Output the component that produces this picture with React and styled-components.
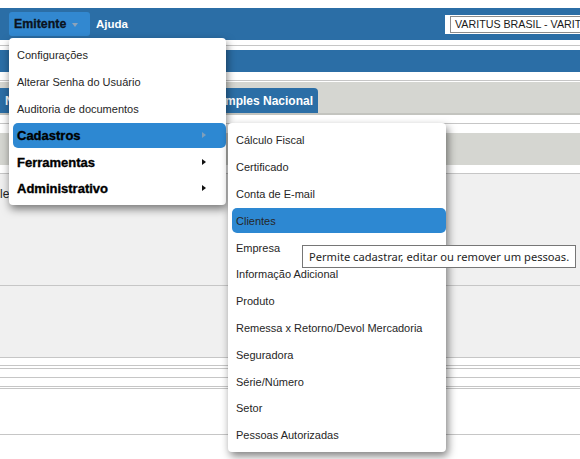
import { styled, createGlobalStyle } from "styled-components";

const GlobalStyle = createGlobalStyle`
  html, body {
    margin: 0;
    padding: 0;
    background: #ffffff;
    font-family: "Liberation Sans", Arial, sans-serif;
  }
`;

const mainItems = [
  { label: "Configurações" },
  { label: "Alterar Senha do Usuário" },
  { label: "Auditoria de documentos" },
  { label: "Cadastros", group: true, active: true },
  { label: "Ferramentas", group: true },
  { label: "Administrativo", group: true },
];

const cadastros = [
  "Cálculo Fiscal",
  "Certificado",
  "Conta de E-mail",
  "Clientes",
  "Empresa",
  "Informação Adicional",
  "Produto",
  "Remessa x Retorno/Devol Mercadoria",
  "Seguradora",
  "Série/Número",
  "Setor",
  "Pessoas Autorizadas",
];

function SubMenu() {
  return (
    <StSubMenu>
      {cadastros.map((label) => (
        <StItem key={label} $active={label === "Clientes"}>
          {label}
        </StItem>
      ))}
      <StTooltip>Permite cadastrar, editar ou remover um pessoas.</StTooltip>
    </StSubMenu>
  );
}

export default function App() {
  return (
    <>
      <GlobalStyle />
      <StPage>
        <StNavBar>
          <StNavMenu>
            <StEmitente>
              Emitente <StCaret />
            </StEmitente>
            <StDropdown>
              {mainItems.map((item) => (
                <StItem
                  key={item.label}
                  $active={item.active}
                  $group={item.group}
                >
                  {item.label}
                  {item.group && <StArrow $active={item.active} />}
                  {item.active && <SubMenu />}
                </StItem>
              ))}
            </StDropdown>
          </StNavMenu>
          <StNavLink>Ajuda</StNavLink>
          <StSelectWrap>
            <StSelect>VARITUS BRASIL - VARITU</StSelect>
          </StSelectWrap>
        </StNavBar>

        <StRule $top={5} $bottom={4} />
        <StSubBar />
        <StRule $top={8} $bottom={1} />

        <StTabBar>
          <StTab $width={200}>NF-e</StTab>
          <StTab $width={110}>Simples Nacional</StTab>
        </StTabBar>

        <StRule $top={8} $bottom={9} />
        <StToolBar />
        <StRule $top={8} $bottom={0} />

        <StPanel $height={111}>
          <StPanelText>le,</StPanelText>
        </StPanel>
        <StRule $top={0} $bottom={0} />
        <StPanel $height={71} />
        <StRule $top={0} $bottom={7} />
        <StRule $top={0} $bottom={2} />
        <StRule $top={0} $bottom={8} />
        <StRule $top={0} $bottom={8} />
        <StRule $top={0} $bottom={1} />
        <StRule $top={0} $bottom={45} />
        <StRule $top={0} $bottom={0} />
      </StPage>
    </>
  );
}

const StPage = styled.div`
  position: relative;
  width: 580px;
  height: 459px;
  padding-top: 8px;
  box-sizing: border-box;
  overflow: hidden;
`;

const StNavBar = styled.div`
  height: 32px;
  background: #2b6ea6;
  display: flex;
  align-items: center;
  padding-left: 9px;
`;

const StNavMenu = styled.div`
  position: relative;
  z-index: 10;
`;

const StEmitente = styled.div`
  height: 24px;
  width: 81px;
  box-sizing: border-box;
  padding-left: 5px;
  display: flex;
  align-items: center;
  gap: 6px;
  background: #3288d0;
  border-radius: 3px;
  font-size: 12.4px;
  font-weight: 700;
  color: #0b1320;
  -webkit-text-stroke: 0.3px #0b1320;
`;

const StCaret = styled.span`
  width: 0;
  height: 0;
  margin-top: 2px;
  border-left: 3.5px solid transparent;
  border-right: 3.5px solid transparent;
  border-top: 4px solid #8da3ba;
`;

const StNavLink = styled.div`
  margin-left: 6px;
  font-size: 11.5px;
  font-weight: 700;
  color: #ffffff;
`;

const StSelectWrap = styled.div`
  margin-left: auto;
  width: 135px;
  height: 19px;
  box-sizing: border-box;
  padding: 1px 0 1px 5px;
  background: #ffffff;
  align-self: center;
  margin-top: 1px;
  overflow: hidden;
`;

const StSelect = styled.div`
  height: 17px;
  box-sizing: border-box;
  border: 1px solid #8c8c8c;
  border-right: none;
  padding-left: 4px;
  font-size: 10.7px;
  line-height: 15px;
  color: #1a1a1a;
  white-space: nowrap;
  overflow: hidden;
`;

const StDropdown = styled.div`
  position: absolute;
  top: calc(100% + 2px);
  left: 0;
  width: 217px;
  box-sizing: border-box;
  padding: 4.5px 0 4px 4px;
  display: flex;
  flex-direction: column;
  gap: 1.8px;
  background: #ffffff;
  border-radius: 4px;
  box-shadow: 1px 4px 8px rgba(0, 0, 0, 0.5);
`;

const StSubMenu = styled.div`
  position: absolute;
  top: 0;
  left: calc(100% + 2px);
  width: 218px;
  box-sizing: border-box;
  padding: 5px 0 4.5px 4px;
  display: flex;
  flex-direction: column;
  gap: 1.8px;
  background: #ffffff;
  border-radius: 4px;
  box-shadow: 2px 4px 8px rgba(0, 0, 0, 0.5);
`;

const StItem = styled.div`
  position: relative;
  height: 25px;
  display: flex;
  align-items: center;
  padding-left: 4px;
  border-radius: 5px;
  white-space: nowrap;
  background: ${(p) => (p.$active ? "#2d88d2" : "transparent")};
  font-size: ${(p) => (p.$group ? "13px" : "11px")};
  font-weight: ${(p) => (p.$group ? 700 : 400)};
  color: ${(p) => (p.$group ? "#000000" : "#262626")};
  -webkit-text-stroke: ${(p) => (p.$group ? "0.35px #000" : "0")};
`;

const StArrow = styled.span`
  position: absolute;
  right: 20px;
  top: 9px;
  width: 0;
  height: 0;
  border-top: 3.5px solid transparent;
  border-bottom: 3.5px solid transparent;
  border-left: 4px solid ${(p) => (p.$active ? "#7f9fbb" : "#111111")};
`;

const StTooltip = styled.div`
  position: absolute;
  left: 74px;
  top: 122px;
  width: 274px;
  height: 23px;
  box-sizing: border-box;
  padding-left: 6px;
  display: flex;
  align-items: center;
  background: #ffffff;
  border: 1px solid #767676;
  font-family: "Noto Sans", "Open Sans", sans-serif;
  font-size: 11.15px;
  font-weight: 400;
  -webkit-text-stroke: 0;
  color: #1e1e1e;
  white-space: nowrap;
`;

const StRule = styled.div`
  border-top: 1px solid #c6c6c6;
  margin-top: ${(p) => p.$top}px;
  margin-bottom: ${(p) => p.$bottom}px;
`;

const StSubBar = styled.div`
  height: 22px;
  background: #2b6ea6;
`;

const StTabBar = styled.div`
  height: 33px;
  box-sizing: border-box;
  padding-top: 6px;
  display: flex;
  gap: 8px;
  align-items: stretch;
  background: #d5d6d1;
  border-bottom: 2px solid #c3c4bf;
`;

const StTab = styled.div`
  width: ${(p) => p.$width}px;
  box-sizing: border-box;
  padding: 0 5px;
  display: flex;
  align-items: center;
  justify-content: flex-end;
  background: #2b6ea6;
  border-radius: 0 4px 0 0;
  color: #ffffff;
  font-size: 12px;
  font-weight: 700;
  &:first-child {
    justify-content: flex-start;
  }
`;

const StToolBar = styled.div`
  height: 32px;
  background: #d5d6d1;
`;

const StPanel = styled.div`
  height: ${(p) => p.$height}px;
  background: #f0f0f0;
  box-sizing: border-box;
  padding-top: 13px;
`;

const StPanelText = styled.div`
  font-size: 12px;
  color: #222222;
  white-space: nowrap;
`;
